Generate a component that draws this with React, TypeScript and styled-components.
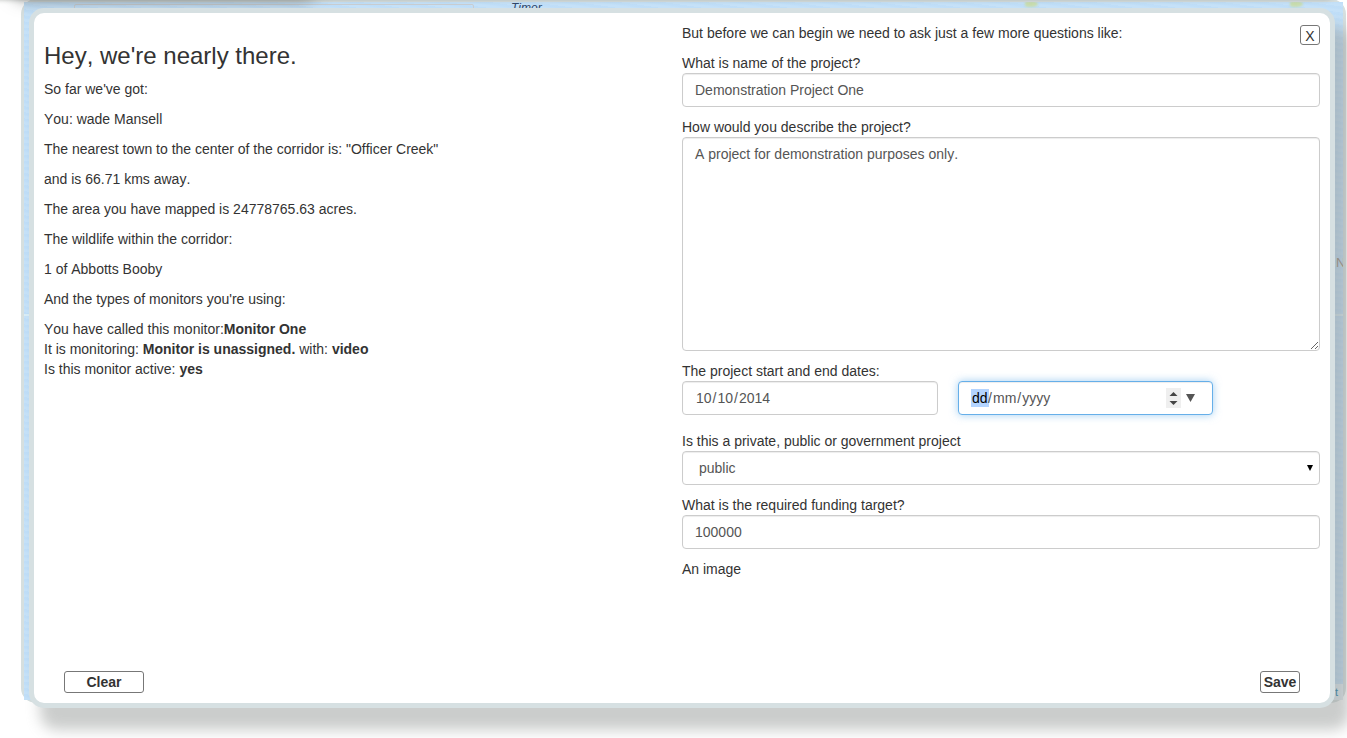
import React from "react";
import styled, { createGlobalStyle, css } from "styled-components";

const Global = createGlobalStyle`
  *, *::before, *::after { box-sizing: border-box; }
  html, body { margin: 0; padding: 0; }
  body {
    background: #fff;
    color: #333;
    font: 14px/20px "Liberation Sans", Arial, sans-serif;
    font-kerning: none;
    overflow: hidden;
  }
`;

const Page = styled.div`
  position: relative;
  width: 100%;
  height: 738px;
  overflow: hidden;
`;

const MapPanel = styled.div`
  position: absolute;
  left: 21px;
  top: -1px;
  width: 1325px;
  height: 704px;
  border: 3px solid #d6dfdf;
  border-radius: 15px;
`;

const Sea = styled.div`
  position: relative;
  width: 100%;
  height: 100%;
  overflow: hidden;
  background:
    linear-gradient(#d8ecf6, #d8ecf6) 0 312px / 100% 2px no-repeat,
    repeating-linear-gradient(8deg, rgba(255, 255, 255, 0.07) 0 2px, rgba(160, 200, 240, 0.05) 4px 6px),
    #c1dff8;
`;

const HeaderShadow = styled.div`
  position: absolute;
  left: -20px;
  top: -40px;
  width: 1360px;
  height: 40px;
  border-radius: 15px;
  box-shadow: 0 0 4px rgba(150, 155, 150, 0.6);
`;

const TabShadow = styled.div`
  position: absolute;
  left: 12px;
  top: -60px;
  width: 304px;
  height: 58px;
  border-radius: 15px;
  box-shadow: 0 0 16px 2px rgba(120, 124, 122, 0.8);
`;

const Boundary = styled.div`
  position: absolute;
  left: 50px;
  top: 2px;
  width: 400px;
  height: 40px;
  border: 1px solid #c9cdd1;
  border-radius: 2px;
`;

const Island = styled.div<{ $x: number }>`
  position: absolute;
  left: ${(p) => p.$x}px;
  top: -1px;
  width: 13px;
  height: 6px;
  border-radius: 40% 60% 60% 40%;
  background: #c8dcae;
  filter: blur(1.2px);
`;

const MapLabel = styled.span<{ $x: number; $y: number; $size?: number; $color?: string; $italic?: boolean }>`
  position: absolute;
  left: ${(p) => p.$x}px;
  top: ${(p) => p.$y}px;
  font-size: ${(p) => p.$size ?? 12}px;
  line-height: 14px;
  font-style: ${(p) => (p.$italic ? "italic" : "normal")};
  color: ${(p) => p.$color ?? "#2f4568"};
`;

const Credit = styled.div`
  position: absolute;
  right: 0;
  bottom: 0;
  width: 60px;
  height: 16px;
  padding-right: 5px;
  background: #e4eef5;
  color: #0078a8;
  font-size: 11px;
  line-height: 17px;
  text-align: right;
`;

const Modal = styled.div`
  position: absolute;
  left: 29px;
  top: 8px;
  width: 1306px;
  height: 700px;
  padding: 10px;
  display: flex;
  flex-direction: column;
  justify-content: space-between;
  background: #fff;
  border: 5px solid #d6e0e2;
  border-radius: 15px;
  box-shadow: 13px 20px 14px 2px rgba(145, 149, 147, 0.47);
`;

const Columns = styled.div`
  display: grid;
  grid-template-columns: 1fr 1fr;
`;

const Column = styled.section`
  display: flex;
  flex-direction: column;
`;

const Title = styled.h3`
  margin: 20px 0 10px;
  font-size: 24px;
  font-weight: 500;
  line-height: 26px;
`;

const Line = styled.p`
  margin: 0 0 10px;
`;

const Intro = styled.div`
  display: flex;
  justify-content: space-between;
  height: 30px;
`;

const Button = styled.button<{ $width: number; $height?: number; $plain?: boolean }>`
  width: ${(p) => p.$width}px;
  height: ${(p) => p.$height ?? 22}px;
  padding: 0;
  background: #fff;
  border: 1px solid #777;
  border-radius: 3px;
  color: #333;
  font: ${(p) => (p.$plain ? 400 : 700)} 14px/20px "Liberation Sans", Arial, sans-serif;
  font-kerning: none;
`;

const CloseButton = styled(Button)`
  margin-top: 2px;
`;

const Field = styled.div<{ $gap?: number }>`
  display: flex;
  flex-direction: column;
  margin-bottom: ${(p) => p.$gap ?? 10}px;
`;

const control = css`
  width: 100%;
  height: 34px;
  padding: 6px 12px;
  background: #fff;
  border: 1px solid #ccc;
  border-radius: 4px;
  box-shadow: inset 0 1px 1px rgba(0, 0, 0, 0.075);
  color: #555;
  font: 14px/20px "Liberation Sans", Arial, sans-serif;
  font-kerning: none;
`;

const TextInput = styled.input`
  ${control}
`;

const TextArea = styled.textarea`
  ${control}
  display: block;
  height: 214px;
  resize: vertical;
`;

const Dates = styled.div`
  display: flex;
  gap: 20px;
`;

const DateBox = styled.div<{ $width: number; $focused?: boolean }>`
  ${control}
  width: ${(p) => p.$width}px;
  padding-right: 17px;
  display: flex;
  align-items: center;
  ${(p) =>
    p.$focused &&
    css`
      border-color: #66afe9;
      box-shadow: inset 0 1px 1px rgba(0, 0, 0, 0.075), 0 0 8px rgba(102, 175, 233, 0.6);
    `}
`;

const DatePart = styled.span<{ $selected?: boolean }>`
  height: 18px;
  padding: 0 1px;
  line-height: 18px;
  ${(p) => p.$selected && "background: #b3d4ff; color: #000; margin-right: -0.5px;"}
`;

const Spinner = styled.svg`
  margin-left: auto;
  width: 15px;
  height: 20px;
  background: #efefef;
`;

const Arrow = styled.svg`
  margin-left: 5px;
  width: 9px;
  height: 8px;
`;

const SelectBox = styled.div`
  ${control}
  padding: 6px 6px 6px 16px;
  display: flex;
  align-items: center;
  justify-content: space-between;
`;

const Footer = styled.footer`
  display: flex;
  justify-content: space-between;
  padding: 0 20px;
`;

export default function App() {
  return (
    <>
      <Global />
      <Page>
        <MapPanel>
          <Sea>
            <Boundary />
            <Island $x={1001} />
            <Island $x={1266} />
            <MapLabel $x={487} $y={-1} $italic>Timor</MapLabel>
            <MapLabel $x={1312} $y={254} $size={13} $color="#9a8674">N</MapLabel>
            <Credit>t</Credit>
          </Sea>
        </MapPanel>
        <HeaderShadow />
        <TabShadow />
        <Modal>
          <Columns>
            <Column>
              <Title>Hey, we're nearly there.</Title>
              <Line>So far we've got:</Line>
              <Line>You: wade Mansell</Line>
              <Line>The nearest town to the center of the corridor is: "Officer Creek"</Line>
              <Line>and is 66.71 kms away.</Line>
              <Line>The area you have mapped is 24778765.63 acres.</Line>
              <Line>The wildlife within the corridor:</Line>
              <Line>1 of Abbotts Booby</Line>
              <Line>And the types of monitors you're using:</Line>
              <Line>
                You have called this monitor:<b>Monitor One</b>
                <br />
                It is monitoring: <b>Monitor is unassigned.</b> with: <b>video</b>
                <br />
                Is this monitor active: <b>yes</b>
              </Line>
            </Column>
            <Column>
              <Intro>
                <span>But before we can begin we need to ask just a few more questions like:</span>
                <CloseButton $width={20} $height={20} $plain>X</CloseButton>
              </Intro>
              <Field>
                <label>What is name of the project?</label>
                <TextInput defaultValue="Demonstration Project One" />
              </Field>
              <Field>
                <label>How would you describe the project?</label>
                <TextArea defaultValue="A project for demonstration purposes only." />
              </Field>
              <Field $gap={16}>
                <label>The project start and end dates:</label>
                <Dates>
                  <DateBox $width={256}>
                    <DatePart>10</DatePart>/<DatePart>10</DatePart>/<DatePart>2014</DatePart>
                  </DateBox>
                  <DateBox $width={255} $focused>
                    <DatePart $selected>dd</DatePart>/<DatePart>mm</DatePart>/<DatePart>yyyy</DatePart>
                    <Spinner viewBox="0 0 15 20">
                      <path d="M3.500 8 7.500 4l4 4ZM3.500 13h8l-4 4Z" fill="#444" />
                    </Spinner>
                    <Arrow viewBox="0 0 9 8">
                      <path d="M0 0h9L4.500 8Z" fill="#555" />
                    </Arrow>
                  </DateBox>
                </Dates>
              </Field>
              <Field>
                <label>Is this a private, public or government project</label>
                <SelectBox>
                  <span>public</span>
                  <svg width="6" height="6" viewBox="0 0 6 6">
                    <path d="M0 0h6L3 6Z" fill="#000" />
                  </svg>
                </SelectBox>
              </Field>
              <Field>
                <label>What is the required funding target?</label>
                <TextInput defaultValue="100000" />
              </Field>
              <label>An image</label>
            </Column>
          </Columns>
          <Footer>
            <Button $width={80}>Clear</Button>
            <Button $width={40}>Save</Button>
          </Footer>
        </Modal>
      </Page>
    </>
  );
}
